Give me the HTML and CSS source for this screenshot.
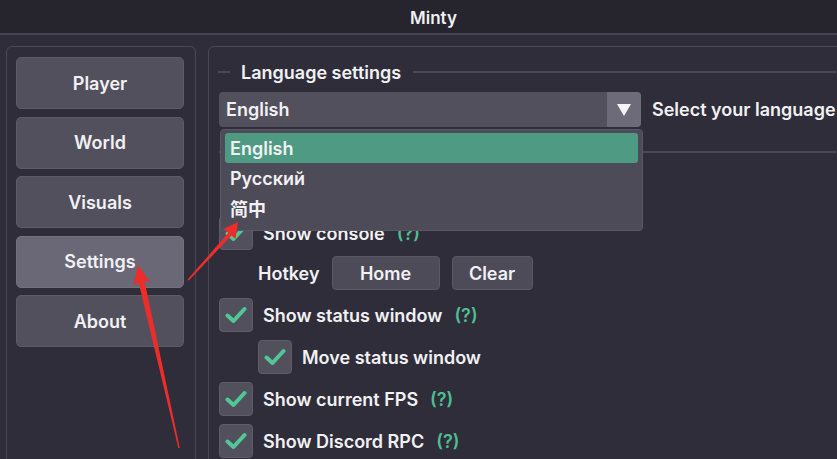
FILE: index.html
```html
<!DOCTYPE html>
<html>
<head>
<meta charset="utf-8">
<link rel="stylesheet" href="styles.css">
</head>
<body>
<div class="window">
  <header class="titlebar"><span class="title">Minty</span></header>
  <div class="main">
    <aside class="sidebar">
      <div class="nav-btn">Player</div>
      <div class="nav-btn">World</div>
      <div class="nav-btn">Visuals</div>
      <div class="nav-btn active">Settings</div>
      <div class="nav-btn">About</div>
    </aside>
    <section class="content">
      <div class="group-header"><span class="dash"></span><span class="group-title">Language settings</span><span class="rule"></span></div>
      <div class="combo-row">
        <div class="combo">
          <span class="combo-value">English</span>
          <span class="combo-arrow"><svg width="16" height="14" viewBox="0 0 16 14"><path d="M1 1 H15 L8 13 Z" fill="#f4f4f6"/></svg></span>
        </div>
        <span class="combo-label">Select your language</span>
      </div>
      <div class="group-header second"><span class="rule"></span></div>
      <div class="check-row first">
        <span class="checkbox"><svg width="22" height="18" viewBox="0 0 22 18"><path d="M2.5 9.5 L8.5 15 L19.5 3" fill="none" stroke="#52c796" stroke-width="4" stroke-linecap="round" stroke-linejoin="round"/></svg></span>
        <span class="check-label">Show console</span><span class="help">(?)</span>
      </div>
      <div class="hotkey-row">
        <span class="hotkey-label">Hotkey</span>
        <span class="btn btn-home">Home</span>
        <span class="btn btn-clear">Clear</span>
      </div>
      <div class="check-row">
        <span class="checkbox"><svg width="22" height="18" viewBox="0 0 22 18"><path d="M2.5 9.5 L8.5 15 L19.5 3" fill="none" stroke="#52c796" stroke-width="4" stroke-linecap="round" stroke-linejoin="round"/></svg></span>
        <span class="check-label">Show status window</span><span class="help">(?)</span>
      </div>
      <div class="check-row indent">
        <span class="checkbox"><svg width="22" height="18" viewBox="0 0 22 18"><path d="M2.5 9.5 L8.5 15 L19.5 3" fill="none" stroke="#52c796" stroke-width="4" stroke-linecap="round" stroke-linejoin="round"/></svg></span>
        <span class="check-label">Move status window</span>
      </div>
      <div class="check-row">
        <span class="checkbox"><svg width="22" height="18" viewBox="0 0 22 18"><path d="M2.5 9.5 L8.5 15 L19.5 3" fill="none" stroke="#52c796" stroke-width="4" stroke-linecap="round" stroke-linejoin="round"/></svg></span>
        <span class="check-label">Show current FPS</span><span class="help">(?)</span>
      </div>
      <div class="check-row">
        <span class="checkbox"><svg width="22" height="18" viewBox="0 0 22 18"><path d="M2.5 9.5 L8.5 15 L19.5 3" fill="none" stroke="#52c796" stroke-width="4" stroke-linecap="round" stroke-linejoin="round"/></svg></span>
        <span class="check-label">Show Discord RPC</span><span class="help">(?)</span>
      </div>

      <div class="popup">
        <div class="popup-item selected">English</div>
        <div class="popup-item">Русский</div>
        <div class="popup-item">简中</div>
      </div>
    </section>
  </div>
  <svg class="annotations" width="837" height="459" viewBox="0 0 837 459">
    <polygon fill="#ee2d2b" points="138,265 150,282 144.5,281 179.8,448 178.4,448.2 138.6,282.2 133.5,285.5"/>
    <polygon fill="#ee2d2b" points="238,222 235.5,239 231.5,235.5 188.8,280.6 187.6,279.5 228.4,232.8 223.5,229"/>
  </svg>
</div>
</body>
</html>
```
FILE: styles.css
```css
* { box-sizing: border-box; }
html, body { margin: 0; padding: 0; }
body {
  width: 837px;
  height: 459px;
  overflow: hidden;
  background: #2f2d39;
  font-family: "Inter", "Noto Sans CJK SC", sans-serif;
  font-weight: 600;
  color: #f1f1f3;
}
.window { position: relative; width: 837px; height: 459px; overflow: hidden; }
.titlebar {
  height: 35px;
  background: #26242d;
  border-bottom: 2px solid #45434f;
  display: flex;
  align-items: center;
  justify-content: center;
  padding-left: 30px;
  font-size: 17px;
}
.title { margin-top: 3px; }
.main {
  display: flex;
  gap: 12px;
  padding: 11px 0 0 6px;
}
.sidebar {
  flex: 0 0 190px;
  height: 430px;
  border: 1px solid #4a4855;
  border-radius: 6px;
  padding: 10px 11px 0 9px;
  display: flex;
  flex-direction: column;
  gap: 7.5px;
}
.nav-btn {
  height: 52px;
  background: #53505e;
  border: 1px solid #5d5a69;
  border-radius: 5px;
  display: flex;
  align-items: center;
  justify-content: center;
  font-size: 18px;
}
.nav-btn.active { background: #6a6776; border-color: #74717f; }
.content {
  position: relative;
  flex: 0 0 631px;
  height: 430px;
  border: 1px solid #4a4855;
  border-radius: 6px;
  padding: 15px 10px 0 10px;
}
.group-header {
  height: 20px;
  display: flex;
  align-items: center;
  font-size: 18px;
}
.group-header .dash { width: 12px; height: 2px; background: #4a4855; margin-left: -1px; }
.group-header .group-title { margin: 0 12px 0 11px; }
.group-header .rule { flex: 1; height: 2px; background: #4a4855; }
.group-header.second { margin-top: 15px; }
.combo-row {
  margin-top: 10px;
  display: flex;
  align-items: center;
  white-space: nowrap;
}
.combo {
  flex: 0 0 422px;
  height: 35px;
  background: #53505e;
  border-radius: 4px;
  display: flex;
  align-items: center;
  overflow: hidden;
}
.combo-value { flex: 1; padding-left: 7px; font-size: 18px; }
.combo-arrow {
  width: 34px;
  height: 35px;
  background: #6d6a79;
  display: flex;
  align-items: center;
  justify-content: center;
}
.combo-label { margin-left: 11px; font-size: 18px; }
.check-row {
  display: flex;
  align-items: center;
  height: 34px;
  margin-top: 8px;
  font-size: 18px;
}
.check-row.first { margin-top: 54px; }
.check-row.indent { padding-left: 39px; }
.checkbox {
  flex: 0 0 34px;
  height: 34px;
  background: #53505e;
  border: 1px solid #5e5b6a;
  border-radius: 4px;
  display: flex;
  align-items: center;
  justify-content: center;
}
.check-label { margin-left: 10px; white-space: nowrap; }
.help { margin-left: 12px; color: #4dbf92; }
.hotkey-row {
  display: flex;
  align-items: center;
  height: 34px;
  margin-top: 6px;
  padding-left: 39px;
  font-size: 18px;
}
.hotkey-label { margin-right: 12px; }
.btn {
  height: 34px;
  background: #4e4b59;
  border: 1px solid #5b5866;
  border-radius: 4px;
  display: flex;
  align-items: center;
  justify-content: center;
}
.btn-home { width: 108px; }
.btn-clear { width: 81px; margin-left: 12px; }
.popup {
  position: absolute;
  left: 11px;
  top: 82px;
  width: 423px;
  height: 102px;
  background: #4e4b59;
  border: 1px solid #5b5866;
  border-radius: 4px;
  padding: 3px 4px;
  font-size: 18px;
}
.popup-item {
  height: 30px;
  display: flex;
  align-items: center;
  padding-left: 5px;
}
.popup-item.selected { background: #4f9a83; border-radius: 3px; }
.annotations { position: absolute; left: 0; top: 0; pointer-events: none; }
```
